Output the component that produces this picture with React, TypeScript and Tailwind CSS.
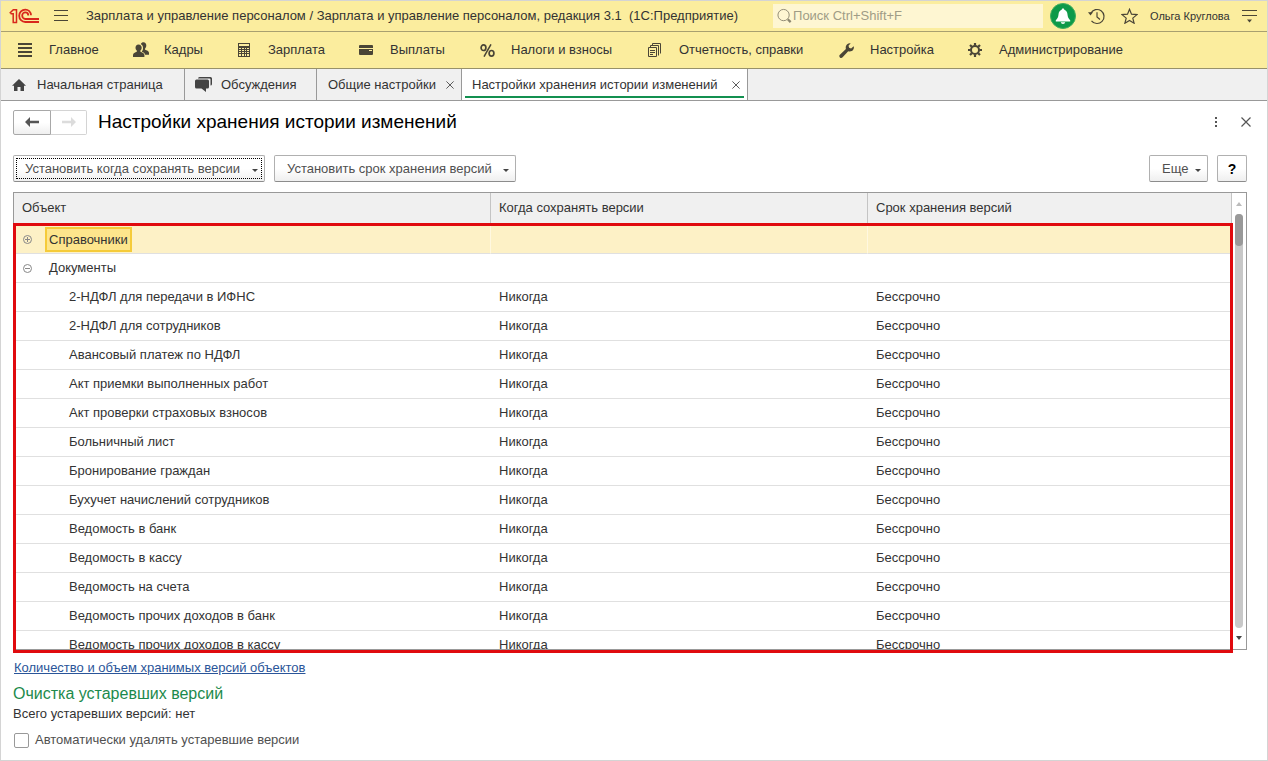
import { useState } from 'react'
import type { ReactNode } from 'react'

const DOCUMENTS = [
  '2-НДФЛ для передачи в ИФНС',
  '2-НДФЛ для сотрудников',
  'Авансовый платеж по НДФЛ',
  'Акт приемки выполненных работ',
  'Акт проверки страховых взносов',
  'Больничный лист',
  'Бронирование граждан',
  'Бухучет начислений сотрудников',
  'Ведомость в банк',
  'Ведомость в кассу',
  'Ведомость на счета',
  'Ведомость прочих доходов в банк',
  'Ведомость прочих доходов в кассу',
]

function LinesIcon() {
  return (
    <svg width="14" height="14" viewBox="0 0 14 14" fill="#4a4536">
      <path d="M0 0h14v2H0zM0 4h14v2H0zM0 8h14v2H0zM0 12h14v2H0z" />
    </svg>
  )
}

function PeopleIcon() {
  return (
    <svg width="16" height="16" viewBox="0 0 16 16" fill="#4a4536">
      <path d="M7.800 2.200C8.300.8 9.300.3 10.400.3c1.900 0 2.900 1.400 2.900 3.200 0 1.200-.5 2.300-1.200 2.900v1.300c1.600.6 3.900 1.300 3.900 3.100v1.900h-3.800c-.3-1.600-1.800-2.400-3.400-3 .9-1.200 1.300-2.400 1.200-4C10 4 9.200 2.700 7.800 2.200z" />
      <path d="M5.500 2.500c2 0 3.200 1.400 3.200 3.200 0 1.200-.6 2.300-1.300 2.900v1.200c1.600.7 4 1.400 4 3.300V15H0v-1.900c0-1.900 2.200-2.600 3.800-3.300V8.600c-.7-.6-1.300-1.700-1.300-2.900 0-1.800 1-3.200 3-3.200z" />
    </svg>
  )
}

function CalculatorIcon() {
  return (
    <svg width="13" height="14" viewBox="0 0 13 14" className="ml-px">
      <path fill="#4a4536" d="M0 0h12v14H0z" />
      <path fill="#fbed9e" d="M1 1h10v2H1zM1 5h2v1H1zM4 5h2v1H4zM7 5h1v1H7zM9 5h2v1H9zM1 7h2v1H1zM4 7h2v1H4zM7 7h1v1H7zM9 7h2v1H9zM1 9h2v1H1zM4 9h2v1H4zM7 9h1v1H7zM9 9h2v1H9zM1 11h2v2H1zM4 11h2v2H4zM7 11h1v2H7zM9 11h2v2H9z" />
    </svg>
  )
}

function WalletIcon() {
  return (
    <svg width="14" height="10" viewBox="0 0 14 10">
      <rect width="14" height="10" rx="1" fill="#4a4536" />
      <path fill="#fbed9e" d="M0 3h14v1H0zM10 5h3v1h-3z" />
    </svg>
  )
}

function PercentIcon() {
  return (
    <svg width="15" height="13" viewBox="0 0 15 13" fill="none" stroke="#4a4536">
      <ellipse cx="3.500" cy="3.700" rx="2.400" ry="2.800" strokeWidth="1.700" />
      <ellipse cx="11.500" cy="9.300" rx="2.400" ry="2.800" strokeWidth="1.700" />
      <path d="M11 .3L4 12.700" strokeWidth="1.500" />
    </svg>
  )
}

function PapersIcon() {
  return (
    <svg width="13" height="14" viewBox="0 0 13 14" fill="none" stroke="#4a4536">
      <path d="M.5 4.500h8v9h-8zM2.500 4.500v-2h8v10M4.500 2.500v-2h8v10M2 7.500h5M2 9.500h5M2 11.500h3" />
    </svg>
  )
}

function WrenchIcon() {
  return (
    <svg width="15" height="15" viewBox="0 0 15 15" fill="#4a4536">
      <path d="M11.700.3L9.500 2.800l.6 2 2 .7L14.700 3.200c.6 2-.2 4-1.900 4.900-1.200.6-2.500.6-3.600.2l-5.600 6c-.7.800-1.900.8-2.700.1-.8-.8-.8-2 0-2.700l6-5.600c-.5-2 0-3.800 1.300-4.900C9.200.4 10.500 0 11.700.3z" />
    </svg>
  )
}

function GearIcon() {
  return (
    <svg width="14" height="14" viewBox="0 0 14 14" fill="none" stroke="#4a4536">
      <circle cx="7" cy="7" r="4" strokeWidth="2" />
      <path strokeWidth="2.200" d="M7 0v2.500M7 11.500V14M0 7h2.500M11.500 7H14M2 2l1.800 1.800M10.200 10.200L12 12M12 2l-1.800 1.800M3.800 10.200L2 12" />
    </svg>
  )
}

function Logo() {
  return (
    <svg width="30" height="16" viewBox="0 0 30 16" fill="none" stroke="#d8281c">
      <path strokeWidth="1.500" d="M.7 5.300L4.300 1.700h3.200v13M1.600 5.700h2.600v9M3.500 14.500h4.700" />
      <path strokeWidth="1.800" d="M22 7.200C21.800 4 19.300 1.600 16.300 1.600c-3.400 0-6.100 2.700-6.100 6.100 0 3.500 2.700 6.300 6.100 6.300H30" />
      <path strokeWidth="1.800" d="M19.300 7.500c0-1.800-1.300-3.200-3-3.200S13.200 5.800 13.200 7.600c0 1.900 1.400 3.400 3.100 3.400H30" />
    </svg>
  )
}

function BellIcon() {
  return (
    <svg width="26" height="26" viewBox="0 0 26 26">
      <circle cx="13" cy="13" r="12.500" fill="#0d9a49" stroke="#3fae5c" />
      <path fill="#fff" d="M13 5.500c.8 0 1.300.5 1.300 1.200 2 .6 3 2.300 3.200 4.800.2 2.500 1 4 2.700 5.700v1.300H5.800v-1.300c1.700-1.700 2.500-3.200 2.700-5.700.2-2.500 1.200-4.200 3.200-4.800 0-.7.500-1.200 1.300-1.200zM10.800 19.300h4.400c-.2 1.100-1.100 1.700-2.200 1.700s-2-.6-2.200-1.700z" />
    </svg>
  )
}

function HistoryIcon() {
  return (
    <svg width="17" height="17" viewBox="0 0 17 17" fill="none" stroke="#4a4536" strokeWidth="1.200">
      <path d="M2.800 5.300A7 7 0 1 1 3.500 12.800M9 4.300v4.700l3 2.500" />
      <path d="M0 4.300h5L2.500 7.500z" fill="#4a4536" stroke="none" />
    </svg>
  )
}

function StarIcon() {
  return (
    <svg width="17" height="16" viewBox="0 0 17 16" fill="none" stroke="#4a4536" strokeWidth="1.200">
      <path d="M8.500 1.300l2 4.900 5.500.4-4.200 3.500 1.300 5.100-4.600-2.800-4.600 2.800 1.300-5.100L1 6.600l5.500-.4z" />
    </svg>
  )
}

function HomeIcon() {
  return (
    <svg width="14" height="12" viewBox="0 0 14 12" fill="#444">
      <path d="M7 0l7 6.700h-2V12H8.500V8h-3v4H2V6.700H0z" />
    </svg>
  )
}

function ChatIcon() {
  return (
    <svg width="17" height="15" viewBox="0 0 17 15" fill="#444">
      <path d="M4.500 0h11A1.500 1.500 0 0 1 17 1.500V7a1.500 1.500 0 0 1-1.500 1.500V2.500a1 1 0 0 0-1-1H3A1.500 1.500 0 0 1 4.500 0z" />
      <path d="M1.500 2.500h11A1.500 1.500 0 0 1 14 4v6a1.500 1.500 0 0 1-1.500 1.500H11V15l-4.500-3.500h-5A1.500 1.500 0 0 1 0 10V4a1.500 1.500 0 0 1 1.500-1.500z" />
    </svg>
  )
}

function CrossIcon({ size }: { size: number }) {
  return (
    <svg width={size} height={size} viewBox="0 0 10 10" fill="none" stroke="#555" strokeWidth="1.200">
      <path d="M.5.5l9 9M9.500.5l-9 9" />
    </svg>
  )
}

function ArrowIcon({ forward }: { forward?: boolean }) {
  return (
    <svg width="14" height="10" viewBox="0 0 14 10" fill="currentColor">
      <path d={forward ? 'M14 5L9 0v3.800H0v2.400h9V10z' : 'M0 5l5-5v3.800h9v2.400H5V10z'} />
    </svg>
  )
}

function Caret() {
  return (
    <svg width="6" height="3" viewBox="0 0 6 3" className="mt-1" fill="#444">
      <path d="M0 0h6L3 3z" />
    </svg>
  )
}

function TreeIcon({ open }: { open: boolean }) {
  return (
    <svg width="9" height="9" viewBox="0 0 9 9" fill="none" stroke="#888">
      <circle cx="4.500" cy="4.500" r="4" />
      <path d={open ? 'M2 4.500h5' : 'M2 4.500h5M4.500 2v5'} />
    </svg>
  )
}

const MENU: { label: string; icon: ReactNode }[] = [
  { label: 'Главное', icon: <LinesIcon /> },
  { label: 'Кадры', icon: <PeopleIcon /> },
  { label: 'Зарплата', icon: <CalculatorIcon /> },
  { label: 'Выплаты', icon: <WalletIcon /> },
  { label: 'Налоги и взносы', icon: <PercentIcon /> },
  { label: 'Отчетность, справки', icon: <PapersIcon /> },
  { label: 'Настройка', icon: <WrenchIcon /> },
  { label: 'Администрирование', icon: <GearIcon /> },
]

const BUTTON = 'flex h-[27px] items-center rounded-xs border border-[#b0b0b0] border-b-[#8c8c8c] bg-linear-to-b from-white from-50% to-[#efefef] whitespace-nowrap text-[#505050]'

export default function App() {
  const [autoDelete, setAutoDelete] = useState(false)

  return (
    <div className="flex h-screen flex-col overflow-hidden border border-[#d4d4d4] bg-white font-['Liberation_Sans',Arial,sans-serif] text-[13px] text-[#333]">
      {/* Title bar */}
      <header className="flex h-[31px] shrink-0 items-center border-b border-[#a8a070] bg-[#fbed9e] pr-[10px] pl-2">
        <Logo />
        <button aria-label="Главное меню" className="ml-[15px]">
          <svg width="14" height="12" viewBox="0 0 14 12" stroke="#4a4536">
            <path d="M0 .5h14M0 5.500h14M0 10.500h14" />
          </svg>
        </button>
        <span className="ml-[18px] min-w-0 flex-1 truncate">
          Зарплата и управление персоналом / Зарплата и управление персоналом, редакция 3.1{'\u00a0 '}(1С:Предприятие)
        </span>
        <label className="flex h-6 w-[270px] shrink-0 items-center gap-px bg-[#fef6d2] pl-1">
          <svg width="16" height="16" viewBox="0 0 16 16" fill="none" stroke="#8d8871">
            <circle cx="7" cy="7" r="6" />
            <path d="M11.500 11.500l3 3" strokeWidth="2.500" />
          </svg>
          <input
            aria-label="Поиск"
            placeholder="Поиск Ctrl+Shift+F"
            className="w-full bg-transparent outline-none placeholder:text-[#a09c86]"
          />
        </label>
        <button aria-label="Уведомления" className="ml-[7px]"><BellIcon /></button>
        <button aria-label="История" className="ml-3"><HistoryIcon /></button>
        <button aria-label="Избранное" className="ml-4"><StarIcon /></button>
        <button className="ml-3 w-20 text-left text-[11px] whitespace-nowrap">Ольга Круглова</button>
        <button aria-label="Сервис" className="ml-3">
          <svg width="15" height="13" viewBox="0 0 15 13">
            <path d="M0 .5h15M0 5.500h15" stroke="#4a4536" />
            <path d="M5 9.500h5l-2.500 3z" fill="#4a4536" />
          </svg>
        </button>
      </header>

      {/* Sections */}
      <nav className="grid h-[37px] shrink-0 grid-cols-[115px_104px_122px_121px_168px_191px_129px_auto] items-center justify-start border-b border-[#97916a] bg-[#fbed9e] pl-[17px]">
        {MENU.map(m => (
          <button key={m.label} className="flex items-center whitespace-nowrap">
            <span className="flex w-[31px]">{m.icon}</span>
            {m.label}
          </button>
        ))}
      </nav>

      {/* Open tabs */}
      <div className="flex h-8 shrink-0 border-b border-[#999] bg-[#f0f0f0]">
        <button className="flex w-[184px] items-center gap-[11px] border-r border-[#999] pl-[11px]">
          <HomeIcon />
          Начальная страница
        </button>
        <button className="flex w-[132px] items-center gap-[9px] border-r border-[#999] pl-[10px]">
          <ChatIcon />
          Обсуждения
        </button>
        <div className="flex w-[145px] items-center justify-between border-r border-[#999] pr-[7px] pl-[11px]">
          <button>Общие настройки</button>
          <button aria-label="Закрыть вкладку"><CrossIcon size={8} /></button>
        </div>
        <div className="flex w-[286px] border-r border-[#999] bg-white px-[3px] pb-[2px]">
          <div className="flex flex-1 items-center justify-between border-b-2 border-[#139050] pt-1 pr-1 pl-[7px]">
            <button>Настройки хранения истории изменений</button>
            <button aria-label="Закрыть вкладку"><CrossIcon size={8} /></button>
          </div>
        </div>
      </div>

      <main className="flex min-h-0 flex-1 flex-col pt-[9px] pr-5 pb-[10px] pl-3">
        <div className="flex h-6 shrink-0 items-center">
          <button aria-label="Назад" className="flex h-[25px] w-[38px] items-center justify-center rounded-l-xs border border-[#a8a8a8] bg-linear-to-b from-white from-50% to-[#efefef] text-[#555]">
            <ArrowIcon />
          </button>
          <button aria-label="Вперед" disabled className="flex h-[25px] w-9 items-center justify-center rounded-r-xs border border-l-0 border-[#d4d4d4] text-[#dcdcdc]">
            <ArrowIcon forward />
          </button>
          <h1 className="ml-[11px] text-[19px] leading-6 text-black">Настройки хранения истории изменений</h1>
          <button aria-label="Действия" className="ml-auto">
            <svg width="2" height="11" viewBox="0 0 2 11" fill="#555">
              <path d="M0 0h2v2H0zM0 4h2v2H0zM0 8h2v2H0z" />
            </svg>
          </button>
          <button aria-label="Закрыть" className="mr-[-4px] ml-6"><CrossIcon size={10} /></button>
        </div>

        <div className="mt-[21px] flex shrink-0 items-center">
          <button className={BUTTON + ' w-[252px] justify-between pr-[6px] pl-[11px] outline-1 outline-offset-[-4px] outline-black outline-dotted'}>
            Установить когда сохранять версии
            <Caret />
          </button>
          <button className={BUTTON + ' ml-[9px] w-[242px] justify-between pr-[6px] pl-3'}>
            Установить срок хранения версий
            <Caret />
          </button>
          <button className={BUTTON + ' ml-auto w-[59px] justify-between pr-[6px] pl-3'}>
            Еще
            <Caret />
          </button>
          <button aria-label="Справка" className={BUTTON + ' ml-[9px] w-[30px] justify-center text-sm font-bold text-black'}>
            ?
          </button>
        </div>

        {/* Object list */}
        <div className="relative mt-[10px] flex min-h-0 flex-1 border border-[#999]">
          <div className="min-w-0 flex-1 overflow-hidden">
            <table className="w-full table-fixed border-separate border-spacing-0 text-left">
              <thead>
                <tr className="h-8 bg-[#f0f0f0]">
                  <th className="w-[477px] border-r border-[#c4c4c4] pb-[2px] pl-2 font-normal">Объект</th>
                  <th className="w-[377px] border-r border-[#c4c4c4] pb-[2px] pl-2 font-normal">Когда сохранять версии</th>
                  <th className="pb-[2px] pl-2 font-normal">Срок хранения версий</th>
                </tr>
              </thead>
              <tbody>
                <tr className="h-[29px] bg-[#fdf1c6]">
                  <td className="border-r border-b border-r-[#fff8e0] border-b-[#e0e0e0] p-0 pl-[9px]">
                    <span className="flex items-center">
                      <TreeIcon open={false} />
                      <span className="ml-[13px] border-2 border-[#f5cb3a] bg-[#fde58c] px-[2px] leading-[21px]">Справочники</span>
                    </span>
                  </td>
                  <td className="border-r border-b border-r-[#fff8e0] border-b-[#e0e0e0] p-0"></td>
                  <td className="border-b border-[#e0e0e0] p-0"></td>
                </tr>
                <tr className="h-[29px]">
                  <td colSpan={3} className="border-b border-[#e0e0e0] p-0 pl-[9px]">
                    <span className="flex items-center">
                      <TreeIcon open />
                      <span className="ml-[17px]">Документы</span>
                    </span>
                  </td>
                </tr>
                {DOCUMENTS.map(name => (
                  <tr key={name} className="h-[29px]">
                    <td className="border-b border-[#e0e0e0] p-0 pl-[55px]">{name}</td>
                    <td className="border-b border-[#e0e0e0] p-0 pl-2">Никогда</td>
                    <td className="border-b border-[#e0e0e0] p-0 pl-2">Бессрочно</td>
                  </tr>
                ))}
              </tbody>
            </table>
          </div>
          <div className="flex w-[15px] shrink-0 flex-col items-center border-l border-[#c4c4c4] py-[9px]">
            <svg width="6" height="4" viewBox="0 0 6 4" fill="#bbb"><path d="M0 4h6L3 0z" /></svg>
            <div className="my-2 w-2 flex-1 rounded-full bg-[#c8c8c8]">
              <div className="h-8 rounded-full bg-[#999]" />
            </div>
            <svg width="6" height="4" viewBox="0 0 6 4" fill="#444"><path d="M0 0h6L3 4z" /></svg>
          </div>
          <div className="pointer-events-none absolute top-[30px] right-[13px] bottom-[-4px] left-[-1px] border-3 border-[#e00a0e]" />
        </div>

        <div className="shrink-0 pt-2">
          <a href="#versions" className="ml-px block w-fit leading-5 text-[#2a5599] underline">
            Количество и объем хранимых версий объектов
          </a>
          <h2 className="mt-1 text-base leading-6 text-[#1c8a4c]">Очистка устаревших версий</h2>
          <p className="leading-4">Всего устаревших версий: нет</p>
          <label className="mt-2 flex h-5 w-fit items-center gap-[6px] pl-px text-[#505050]">
            <input
              type="checkbox"
              checked={autoDelete}
              onChange={e => setAutoDelete(e.target.checked)}
              className="size-[15px] appearance-none rounded-xs border border-[#999] bg-white checked:bg-[#139050]"
            />
            Автоматически удалять устаревшие версии
          </label>
        </div>
      </main>
    </div>
  )
}
